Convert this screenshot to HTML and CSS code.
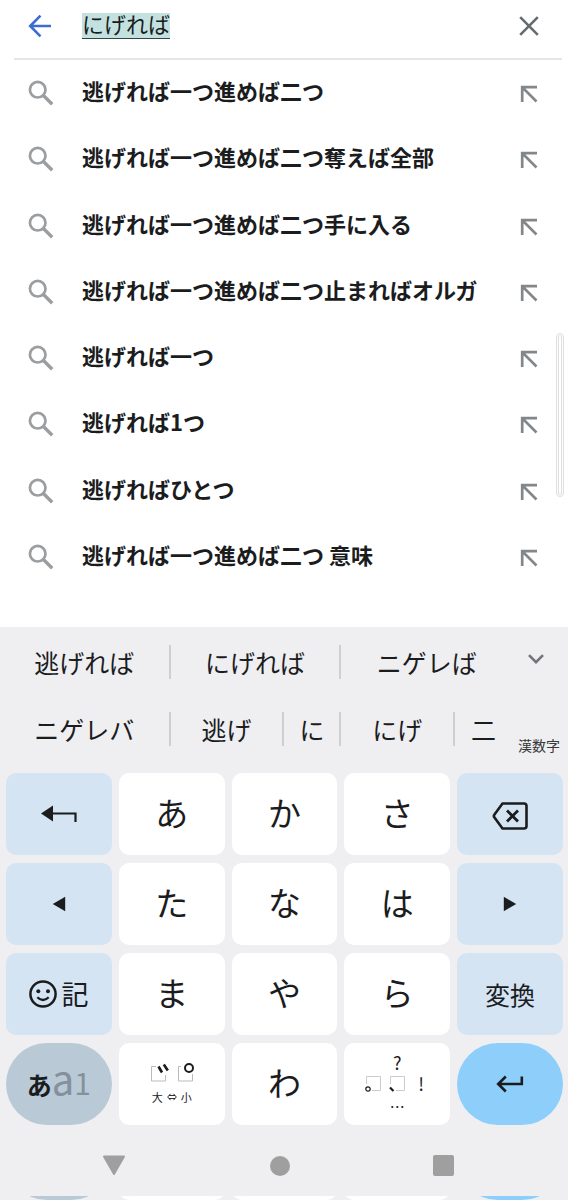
FILE: index.html
```html
<!DOCTYPE html>
<html lang="ja">
<head>
<meta charset="utf-8">
<meta name="viewport" content="width=device-width, initial-scale=1">
<title>検索</title>
<link rel="stylesheet" href="styles.css">
</head>
<body>
<svg class="defs" aria-hidden="true">
  <symbol id="search" viewBox="0 0 26 26"><circle cx="9.7" cy="9.7" r="7.8" fill="none" stroke="currentColor" stroke-width="2.7"/><path d="M15.2 15.2 24.2 24.2" stroke="currentColor" stroke-width="3.4" fill="none"/></symbol>
  <symbol id="insert" viewBox="0 0 18 18"><path d="M2.2 17V2.2H17M2.5 2.5 16.500 16.500" stroke="currentColor" stroke-width="2.7" fill="none"/></symbol>
</svg>
<div class="page">
  <form class="bar">
    <button class="icon-btn back" type="button" aria-label="戻る"><svg width="24" height="24" viewBox="0 0 24 24"><path d="M23 12H2.500M12.500 1.700 2.200 12 12.500 22.300" fill="none" stroke="currentColor" stroke-width="2.600"/></svg></button>
    <div class="field"><input class="query" type="text" value="にげれば" size="8" aria-label="検索"></div>
    <button class="icon-btn clear" type="button" aria-label="消去"><svg width="20" height="20" viewBox="0 0 20 20"><path d="M1.200 1.200 18.800 18.800M18.800 1.200 1.200 18.800" fill="none" stroke="currentColor" stroke-width="2.600"/></svg></button>
  </form>
  <ul class="list">
    <li class="row"><svg class="lens"><use href="#search"/></svg><a class="term" href="#">逃げれば一つ進めば二つ</a><button class="icon-btn insert" aria-label="入力"><svg width="18" height="18"><use href="#insert"/></svg></button></li>
    <li class="row"><svg class="lens"><use href="#search"/></svg><a class="term" href="#">逃げれば一つ進めば二つ奪えば全部</a><button class="icon-btn insert" aria-label="入力"><svg width="18" height="18"><use href="#insert"/></svg></button></li>
    <li class="row"><svg class="lens"><use href="#search"/></svg><a class="term" href="#">逃げれば一つ進めば二つ手に入る</a><button class="icon-btn insert" aria-label="入力"><svg width="18" height="18"><use href="#insert"/></svg></button></li>
    <li class="row"><svg class="lens"><use href="#search"/></svg><a class="term" href="#">逃げれば一つ進めば二つ止まればオルガ</a><button class="icon-btn insert" aria-label="入力"><svg width="18" height="18"><use href="#insert"/></svg></button></li>
    <li class="row"><svg class="lens"><use href="#search"/></svg><a class="term" href="#">逃げれば一つ</a><button class="icon-btn insert" aria-label="入力"><svg width="18" height="18"><use href="#insert"/></svg></button></li>
    <li class="row"><svg class="lens"><use href="#search"/></svg><a class="term" href="#">逃げれば1つ</a><button class="icon-btn insert" aria-label="入力"><svg width="18" height="18"><use href="#insert"/></svg></button></li>
    <li class="row"><svg class="lens"><use href="#search"/></svg><a class="term" href="#">逃げればひとつ</a><button class="icon-btn insert" aria-label="入力"><svg width="18" height="18"><use href="#insert"/></svg></button></li>
    <li class="row"><svg class="lens"><use href="#search"/></svg><a class="term" href="#">逃げれば一つ進めば二つ 意味</a><button class="icon-btn insert" aria-label="入力"><svg width="18" height="18"><use href="#insert"/></svg></button></li>
  </ul>
  <div class="edge-handle"></div>

  <section class="keyboard" aria-label="キーボード">
    <div class="candidates">
      <div class="words">
        <button class="word w3">逃げれば</button><button class="word w3">にげれば</button><button class="word w3 last">ニゲレば</button>
      </div>
      <button class="icon-btn expand" aria-label="候補を開く"><svg width="16" height="10" viewBox="0 0 16 10"><path d="M1 1.200 8 8.200 15 1.200" fill="none" stroke="currentColor" stroke-width="2.600"/></svg></button>
    </div>
    <div class="candidates">
      <div class="words">
        <button class="word w3">ニゲレバ</button><button class="word w2">逃げ</button><button class="word">に</button><button class="word w2">にげ</button><button class="word last">二</button>
      </div>
      <span class="note">漢数字</span>
    </div>

    <div class="keys">
      <button class="key fn" aria-label="戻す"><svg width="38" height="18" viewBox="0 0 38 18"><path d="M1 8.500 13 .5v16z" fill="currentColor"/><path d="M12 8.500H35.500V17" fill="none" stroke="currentColor" stroke-width="2.200"/></svg></button>
      <button class="key kana">あ</button><button class="key kana">か</button><button class="key kana">さ</button>
      <button class="key fn delete" aria-label="削除"><svg width="36" height="28" viewBox="0 0 36 28"><path d="M10.500 1.500H32a2.500 2.500 0 0 1 2.500 2.500V24a2.500 2.500 0 0 1-2.500 2.500H10.500L2.300 15.200a2 2 0 0 1 0-2.400z" fill="none" stroke="currentColor" stroke-width="2.600" stroke-linejoin="round"/><path d="m15 8.500 11 11M26 8.500l-11 11" stroke="currentColor" stroke-width="2.800"/></svg></button>

      <button class="key fn" aria-label="左"><svg width="14" height="16" viewBox="0 0 14 16"><path d="M.8 8 13.200.8v14.400z" fill="currentColor"/></svg></button>
      <button class="key kana">た</button><button class="key kana">な</button><button class="key kana">は</button>
      <button class="key fn" aria-label="右"><svg width="14" height="16" viewBox="0 0 14 16"><path d="M13.200 8 .8.800v14.400z" fill="currentColor"/></svg></button>

      <button class="key fn symbols"><svg width="28" height="28" viewBox="0 0 28 28"><circle cx="14" cy="14" r="12.600" fill="none" stroke="currentColor" stroke-width="2.500"/><circle cx="9.300" cy="11.300" r="2" fill="currentColor"/><circle cx="19" cy="11.300" r="2" fill="currentColor"/><path d="M8.300 17.200Q14 22.800 19.700 17.200" fill="none" stroke="currentColor" stroke-width="2.300"/></svg><span>記</span></button>
      <button class="key kana">ま</button><button class="key kana">や</button><button class="key kana">ら</button>
      <button class="key fn convert">変換</button>

      <button class="key mode"><span class="mode-label"><span class="mode-kana">あ</span><span class="mode-a">a</span><span class="mode-1">1</span></span></button>
      <button class="key marks" aria-label="濁点 半濁点 大小">
        <svg width="44" height="20" viewBox="0 0 44 20"><path d="M6 3.500H1.500V18H15.500V12M31 3.500H28.500V18H42.500V11" fill="none" stroke="#bbb"/><path d="M8.500 3.500 12 9.500M13.800 1.500 17.800 7.500" stroke="currentColor" stroke-width="2.600"/><circle cx="39" cy="5" r="4" fill="none" stroke="currentColor" stroke-width="2"/></svg>
        <span class="sizes"><span>大</span><svg width="10" height="8" viewBox="0 0 10 8"><path d="M3.500.8.700 4l2.800 3.200M6.500.800 9.300 4 6.500 7.200M2 2.500h6M2 5.500h6" fill="none" stroke="currentColor" stroke-width=".9"/></svg><span>小</span></span>
      </button>
      <button class="key kana">わ</button>
      <button class="key punct" aria-label="句読点">
        <span class="wide">?</span>
        <svg width="18" height="18" viewBox="0 0 18 18"><path d="M2.500 10V2.500H16.500V16.500H8" fill="none" stroke="#ccc"/><circle cx="4" cy="15" r="2.200" fill="none" stroke="currentColor" stroke-width="1.200"/></svg>
        <svg width="18" height="18" viewBox="0 0 18 18"><path d="M2.500 10V2.500H16.500V16.500H8" fill="none" stroke="#ccc"/><path d="M2 13.500 5.500 17" stroke="currentColor" stroke-width="2.200"/></svg>
        <span>!</span>
        <span class="wide dots">…</span>
      </button>
      <button class="key enter" aria-label="確定"><svg width="28" height="18" viewBox="0 0 28 18"><path d="M25.800 1.500V9H2.500M9.800 1.500 2.200 9 9.800 16.500" fill="none" stroke="currentColor" stroke-width="2.600"/></svg></button>
    </div>

    <nav class="system">
      <button class="icon-btn" aria-label="閉じる"><svg width="24" height="22" viewBox="0 0 24 22"><path d="M2 1.500H22L12 19z" fill="currentColor" stroke="currentColor" stroke-width="2" stroke-linejoin="round"/></svg></button>
      <button class="icon-btn" aria-label="ホーム"><svg width="20" height="20"><circle cx="10" cy="10" r="10" fill="currentColor"/></svg></button>
      <button class="icon-btn" aria-label="履歴"><svg width="21" height="21"><rect width="21" height="21" rx="2" fill="currentColor"/></svg></button>
    </nav>
    <div class="peek" aria-hidden="true"><i class="key mode"></i><i class="key"></i><i class="key"></i><i class="key"></i><i class="key enter"></i></div>
  </section>
</div>
</body>
</html>
```
FILE: styles.css
```css
* {
  box-sizing: border-box;
}

body {
  margin: 0;
  background: #fff;
  color: #1b1c1e;
  font-family: "Noto Sans CJK JP", sans-serif;
}

button {
  margin: 0;
  padding: 0;
  border: 0;
  background: none;
  color: inherit;
  font: inherit;
}

svg {
  display: block;
  flex: none;
}

.defs {
  position: absolute;
  width: 0;
  height: 0;
}

.page {
  position: relative;
  display: flex;
  flex-direction: column;
  min-height: 100vh;
}

.icon-btn {
  display: flex;
  align-items: center;
  justify-content: center;
}

/* Search bar */
.bar {
  display: flex;
  align-items: center;
  height: 60px;
  margin: 0 6px 0 14px;
  padding: 0 23px 7px 14px;
  border-bottom: 2px solid #e6e6e6;
}

.back {
  color: #3c6cd1;
}

.field {
  flex: 1;
  display: flex;
  margin-left: 30px;
}

.query {
  field-sizing: content;
  height: 26px;
  padding: 0 0 4px;
  border: 0;
  border-bottom: 1px solid #2f4644;
  border-radius: 0;
  outline: 0;
  background: #c3e2df;
  color: #1b1c1e;
  font: 22px/22px "Noto Sans CJK JP", sans-serif;
}

.clear {
  color: #686b6e;
}

/* Suggestions */
.list {
  flex: 1;
  display: grid;
  grid-auto-rows: 1fr;
  margin: 0;
  padding: 0 30px 37px 28px;
  list-style: none;
}

.row {
  display: flex;
  align-items: center;
}

.lens {
  width: 26px;
  height: 26px;
  color: #9b9ea1;
}

.term {
  flex: 1;
  margin-left: 28px;
  padding-bottom: 6px;
  color: inherit;
  font-size: 22px;
  font-weight: 700;
  line-height: 32px;
  text-decoration: none;
  white-space: nowrap;
}

.insert {
  padding-top: 2px;
  color: #83878a;
}

.edge-handle {
  position: absolute;
  top: 333px;
  right: 4px;
  width: 8px;
  height: 164px;
  border: 3px double #dedede;
  border-radius: 4px;
}

/* Keyboard */
.keyboard {
  background: #efeff1;
}

.candidates {
  display: flex;
  height: 67px;
  padding-top: 2px;
}

.words {
  flex: 1;
  display: grid;
  grid-template-columns: repeat(9, 1fr);
  align-items: center;
}

.word {
  height: 34px;
  border-right: 2px solid #cfcfd1;
  font-size: 25px;
  line-height: 34px;
  white-space: nowrap;
}

.w2 {
  grid-column: span 2;
}

.w3 {
  grid-column: span 3;
}

.last {
  border-right: 0;
}

.expand {
  width: 56px;
  padding: 0 8px 6px 0;
  color: #727477;
}

.note {
  width: 56px;
  padding: 0 8px 6px 0;
  align-self: end;
  color: #36383a;
  font-size: 14px;
  line-height: 20px;
  text-align: right;
  white-space: nowrap;
}

.keys {
  display: grid;
  grid-template-columns: repeat(5, minmax(0, 1fr));
  grid-auto-rows: 82px;
  gap: 8px 7px;
  padding: 12px 5px 0 6px;
}

.key {
  display: flex;
  align-items: center;
  justify-content: center;
  border-radius: 10px;
  background: #fff;
  line-height: 40px;
}

.kana {
  padding-bottom: 5px;
  font-size: 33px;
}

.fn {
  background: #d4e4f3;
}

.delete {
  padding-top: 4px;
}

.symbols {
  gap: 4px;
  font-size: 27px;
}

.convert {
  font-size: 25px;
}

.mode {
  border-radius: 41px;
  background: #b9c9d6;
}

.mode-label {
  display: flex;
  align-items: baseline;
  padding-bottom: 6px;
}

.mode-kana {
  font-size: 25px;
  font-weight: 700;
}

.mode-a,
.mode-1 {
  color: #84919d;
}

.mode-a {
  font-size: 40px;
}

.mode-1 {
  font-size: 30px;
}

.marks {
  flex-direction: column;
  gap: 6px;
}

.sizes {
  display: flex;
  align-items: center;
  gap: 4px;
  font-size: 11px;
  line-height: 16px;
}

.punct {
  display: grid;
  grid-template-columns: repeat(3, 24px);
  grid-template-rows: 22px 20px 24px;
  align-content: center;
  justify-items: center;
  font-size: 18px;
  line-height: 20px;
}

.wide {
  grid-column: 1 / -1;
}

.dots {
  align-self: end;
  font-size: 15px;
}

.enter {
  border-radius: 41px;
  background: #8dcefb;
}

.system {
  display: flex;
  align-items: center;
  justify-content: space-between;
  height: 71px;
  padding: 10px 20% 0 18%;
  color: #9f9f9f;
}

.peek {
  display: flex;
  align-items: flex-end;
  gap: 7px;
  height: 4px;
  padding: 0 5px 0 6px;
  overflow: hidden;
}

.peek .key {
  flex: 1;
  height: 82px;
}
```
